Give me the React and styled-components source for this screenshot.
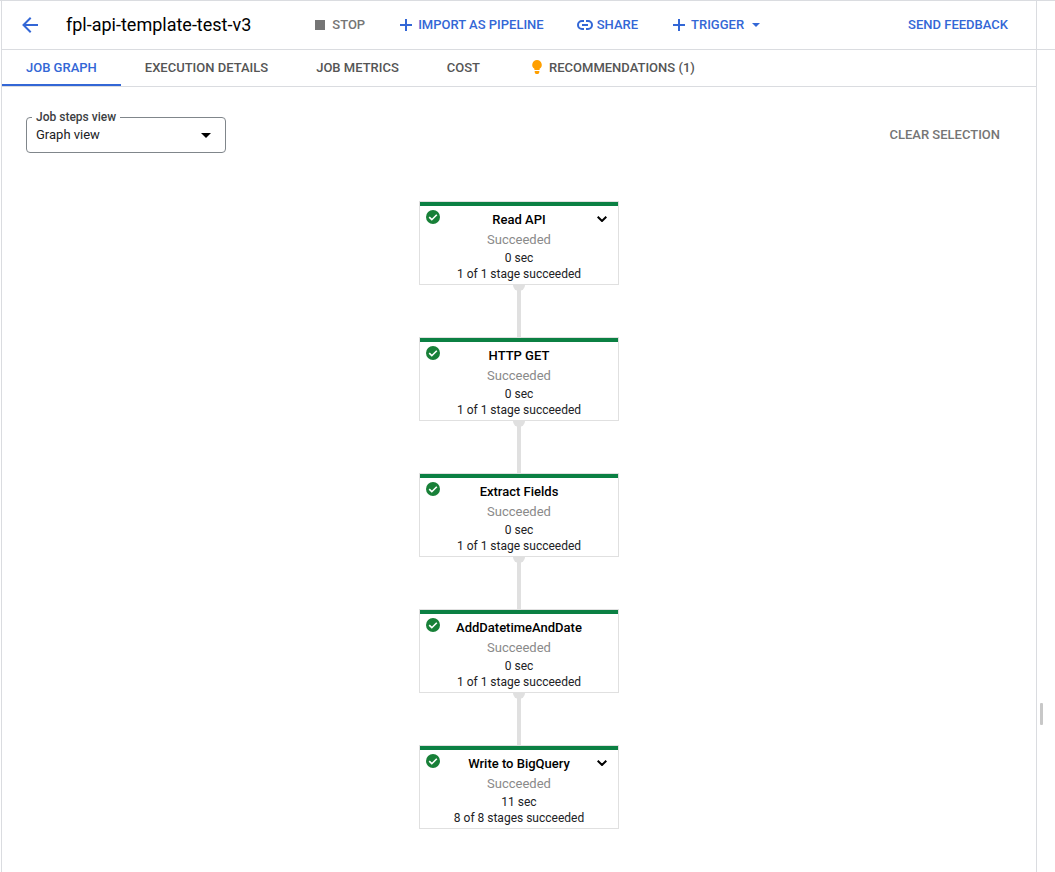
import React, { useState } from "react";
import styled, { createGlobalStyle } from "styled-components";

const tabs = [
  { id: "graph", label: "JOB GRAPH" },
  { id: "details", label: "EXECUTION DETAILS" },
  { id: "metrics", label: "JOB METRICS" },
  { id: "cost", label: "COST" },
  { id: "recommendations", label: "RECOMMENDATIONS (1)", hint: true },
];

const steps = [
  { name: "Read API", time: "0 sec", stages: "1 of 1 stage succeeded", expandable: true },
  { name: "HTTP GET", time: "0 sec", stages: "1 of 1 stage succeeded" },
  { name: "Extract Fields", time: "0 sec", stages: "1 of 1 stage succeeded" },
  { name: "AddDatetimeAndDate", time: "0 sec", stages: "1 of 1 stage succeeded" },
  { name: "Write to BigQuery", time: "11 sec", stages: "8 of 8 stages succeeded", expandable: true },
];

// Icons
const BackIcon = () => (
  <svg width="16" height="16" viewBox="0 0 16 16" fill="none" stroke="currentColor" strokeWidth="2">
    <path d="M16 8H1.5M8.7 0.8L1.5 8l7.2 7.2" />
  </svg>
);

const StopIcon = () => (
  <svg width="16" height="16" viewBox="0 0 16 16">
    <path d="M3 3h10v10H3z" fill="currentColor" />
  </svg>
);

const PlusIcon = () => (
  <svg width="16" height="16" viewBox="0 0 16 16">
    <path d="M7 2h2v5h5v2H9v5H7V9H2V7h5z" fill="currentColor" />
  </svg>
);

const LinkIcon = () => (
  <svg width="16" height="16" viewBox="0 0 16 16" fill="none" stroke="currentColor" strokeWidth="2">
    <path d="M7 4H5a4 4 0 0 0 0 8h2M9 4h2a4 4 0 0 1 0 8H9M5 8h6" />
  </svg>
);

const CaretIcon = () => (
  <svg width="8" height="4" viewBox="0 0 8 4">
    <path d="M0 0h8L4 4z" fill="currentColor" />
  </svg>
);

const BulbIcon = () => (
  <svg width="17" height="16" viewBox="0 0 17 16">
    <path
      d="M9 1a4.8 4.8 0 0 0-2.600 8.800V11h5.200V9.800A4.800 4.800 0 0 0 9 1zM6.700 12h4.600v1.500L10.300 15H7.700l-1-1.500z"
      fill="#ff9f00"
    />
  </svg>
);

const CheckIcon = () => (
  <svg width="14" height="14" viewBox="0 0 14 14">
    <circle cx="7" cy="7" r="7" fill="#188038" />
    <path d="M3.2 7.2l2.6 2.500 5-5" fill="none" stroke="#fff" strokeWidth="1.6" />
  </svg>
);

const ChevronIcon = () => (
  <svg width="10" height="6" viewBox="0 0 10 6">
    <path d="M0.700 0.700L5 5l4.300-4.300" fill="none" stroke="#000" strokeWidth="2" />
  </svg>
);

function Step({ step }) {
  return (
    <Card>
      <Status>
        <CheckIcon />
      </Status>
      {step.expandable && (
        <Expand aria-label={`Expand ${step.name}`}>
          <ChevronIcon />
        </Expand>
      )}
      <StepName>{step.name}</StepName>
      <StepState>Succeeded</StepState>
      <StepInfo>{step.time}</StepInfo>
      <StepInfo>{step.stages}</StepInfo>
    </Card>
  );
}

function App() {
  const [tab, setTab] = useState("graph");
  const [view, setView] = useState("graph");

  return (
    <>
      <GlobalStyle />
      <Page>
        <Main>
          <Header>
            <BackButton aria-label="Back">
              <BackIcon />
            </BackButton>
            <Title>fpl-api-template-test-v3</Title>
            <Actions>
              <Action disabled>
                <StopIcon />
                STOP
              </Action>
              <Action>
                <PlusIcon />
                IMPORT AS PIPELINE
              </Action>
              <Action>
                <LinkIcon />
                SHARE
              </Action>
              <Action>
                <PlusIcon />
                TRIGGER
                <Caret>
                  <CaretIcon />
                </Caret>
              </Action>
            </Actions>
            <Action>SEND FEEDBACK</Action>
          </Header>
          <Tabs>
            {tabs.map((t) => (
              <Tab key={t.id} $active={t.id === tab} onClick={() => setTab(t.id)}>
                {t.hint && <BulbIcon />}
                {t.label}
              </Tab>
            ))}
          </Tabs>
          <Controls>
            <Field>
              <label htmlFor="view">Job steps view</label>
              <select id="view" value={view} onChange={(e) => setView(e.target.value)}>
                <option value="graph">Graph view</option>
                <option value="table">Table view</option>
              </select>
              <svg width="10" height="5" viewBox="0 0 10 5">
                <path d="M0 0h10L5 5z" />
              </svg>
            </Field>
            <Action disabled>CLEAR SELECTION</Action>
          </Controls>
          <Graph>
            {steps.map((step, i) => (
              <React.Fragment key={step.name}>
                {i > 0 && <Connector />}
                <Step step={step} />
              </React.Fragment>
            ))}
          </Graph>
        </Main>
        <Side>
          <SideHeader />
          <Splitter>
            <Handle />
          </Splitter>
        </Side>
      </Page>
    </>
  );
}

const GlobalStyle = createGlobalStyle`
  * {
    box-sizing: border-box;
  }
  body {
    margin: 0;
    background: #fff;
    color: #202124;
    font-family: Roboto, sans-serif;
    font-size: 13px;
  }
  button, select {
    font: inherit;
    color: inherit;
    background: none;
    border: none;
    padding: 0;
    cursor: pointer;
  }
  svg {
    display: block;
    flex-shrink: 0;
  }
`;

const Page = styled.div`
  display: flex;
  min-height: 100vh;
  padding-left: 1px;
  border-top: 1px solid #dadce0;
`;

const Main = styled.main`
  flex: 1;
  min-width: 0;
  border-left: 1px solid #dadce0;
  border-right: 1px solid #dadce0;
`;

const Header = styled.header`
  display: flex;
  align-items: center;
  height: 49px;
  padding: 0 28px 0 20px;
  border-bottom: 1px solid #dadce0;
`;

const BackButton = styled.button`
  color: #3367d6;
`;

const Title = styled.h1`
  margin: 0 61px 0 28px;
  color: #000;
  font-size: 18px;
  line-height: 24px;
  font-weight: 400;
  white-space: nowrap;
`;

const Actions = styled.div`
  display: flex;
  flex: 1;
  gap: 33px;
`;

const Action = styled.button`
  display: flex;
  align-items: center;
  gap: 4px;
  color: #3367d6;
  font-weight: 500;
  line-height: 20px;
  white-space: nowrap;
  &:disabled {
    color: #757575;
    cursor: default;
  }
`;

const Caret = styled.span`
  padding-left: 4px;
`;

const Tabs = styled.nav`
  display: flex;
  height: 37px;
  border-bottom: 1px solid #dadce0;
`;

const Tab = styled.button`
  display: flex;
  align-items: center;
  gap: 4px;
  padding: 0 24px;
  color: ${(props) => (props.$active ? "#3367d6" : "#555")};
  font-weight: 500;
  white-space: nowrap;
  border-bottom: 2px solid ${(props) => (props.$active ? "#3367d6" : "transparent")};
`;

const Controls = styled.div`
  display: flex;
  align-items: center;
  justify-content: space-between;
  padding: 30px 36px 0 24px;
`;

const Field = styled.div`
  position: relative;
  width: 200px;
  label {
    position: absolute;
    top: -8px;
    left: 6px;
    padding: 0 4px;
    background: #fff;
    color: #3c4043;
    font-size: 12px;
    font-weight: 500;
    line-height: 16px;
  }
  select {
    appearance: none;
    display: block;
    width: 100%;
    height: 36px;
    padding: 0 28px 2px 9px;
    border: 1px solid #80868b;
    border-radius: 4px;
  }
  svg {
    position: absolute;
    top: 16px;
    right: 15px;
    pointer-events: none;
  }
`;

const Graph = styled.section`
  display: flex;
  flex-direction: column;
  align-items: center;
  padding: 48px 0 40px;
`;

const Card = styled.article`
  position: relative;
  width: 200px;
  padding-bottom: 2px;
  border: 1px solid #e0e0e0;
  text-align: center;
  &::before {
    content: "";
    display: block;
    height: 4px;
    margin-bottom: 4px;
    background: #0b8043;
  }
`;

const Status = styled.span`
  position: absolute;
  top: 8px;
  left: 6px;
`;

const Expand = styled.button`
  position: absolute;
  top: 14px;
  right: 11px;
`;

const StepName = styled.h2`
  margin: 0;
  color: #000;
  font-size: 13px;
  font-weight: 500;
  line-height: 20px;
`;

const StepState = styled.p`
  margin: 0;
  color: #8a8a8a;
  line-height: 20px;
`;

const StepInfo = styled.p`
  margin: 0;
  font-size: 12px;
  line-height: 16px;
`;

const Connector = styled.div`
  position: relative;
  width: 4px;
  height: 52px;
  background: #e0e0e0;
  &::before {
    content: "";
    position: absolute;
    top: 0;
    left: -4px;
    width: 12px;
    height: 6px;
    border-radius: 0 0 6px 6px;
    background: #e0e0e0;
  }
`;

const Side = styled.aside`
  display: flex;
  flex-direction: column;
  width: 18px;
`;

const SideHeader = styled.div`
  height: 49px;
  border-bottom: 1px solid #dadce0;
`;

const Splitter = styled.div`
  display: flex;
  flex-direction: column;
  flex: 1;
  padding-left: 3px;
  &::before {
    content: "";
    flex: 40;
  }
  &::after {
    content: "";
    flex: 9;
  }
`;

const Handle = styled.div`
  width: 3px;
  height: 22px;
  border-radius: 1px;
  background: #c8c8c8;
`;

export default App;
